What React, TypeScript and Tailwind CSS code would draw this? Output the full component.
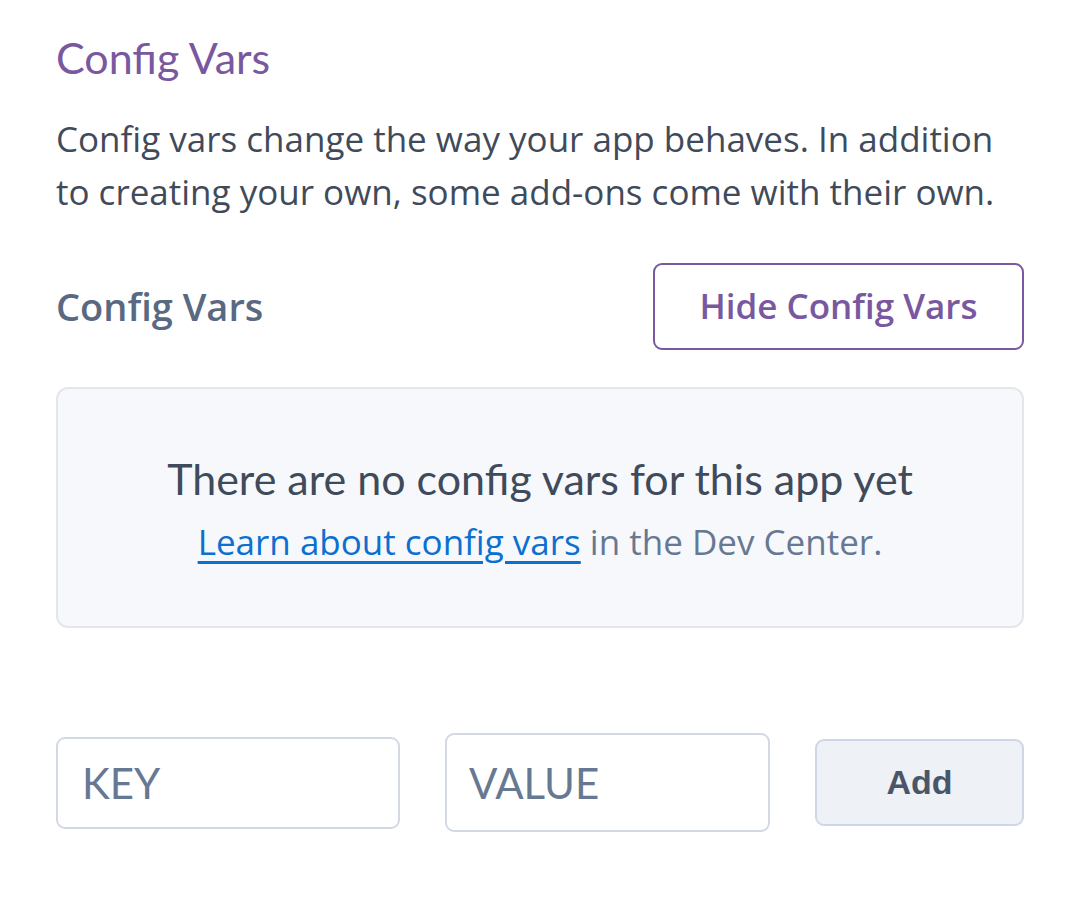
export default function App() {
  return (
    <div className="min-h-screen bg-white px-[56px] pt-[30px] font-['Open_Sans',sans-serif]">
      {/* Section header */}
      <h2 className="font-['Lato',sans-serif] text-[43px] leading-[56px] text-[#79589f]">Config Vars</h2>
      <p className="mt-[26px] text-[35px] leading-[53px] text-[#3f4b5b]">
        Config vars change the way your app behaves. In addition to creating your own, some add-ons come with their own.
      </p>

      {/* Config vars panel */}
      <div className="mt-[45px] flex items-center justify-between">
        <h3 className="text-[38px] font-semibold text-[#596981]">Config Vars</h3>
        <button className="h-[87px] w-[371px] rounded-[9px] border-2 border-[#79589f] bg-white text-[35px] font-semibold text-[#79589f]">
          Hide Config Vars
        </button>
      </div>

      <div className="mt-[37px] flex h-[241px] flex-col items-center justify-center rounded-[12px] border-2 border-[#e3e7ec] bg-[#f7f8fb] pt-[2px]">
        <p className="font-['Lato',sans-serif] text-[43px] leading-[52px] text-[#3f4b5b]">There are no config vars for this app yet</p>
        <p className="mt-[14px] text-[35px] leading-[46px] text-[#677992]">
          <a href="#" className="text-[#0b70d0] underline underline-offset-[6px]">Learn about config vars</a> in the Dev Center.
        </p>
      </div>

      {/* Add row */}
      <div className="mt-[105px] flex items-center font-['Lato',sans-serif]">
        <input
          placeholder="KEY"
          className="h-[92px] w-[344px] rounded-[9px] border-2 border-[#d3d9e4] bg-white px-[24px] text-[42px] text-[#3f4b5b] placeholder:text-[#677992] outline-none"
        />
        <input
          placeholder="VALUE"
          className="ml-[45px] h-[99px] w-[325px] rounded-[9px] border-2 border-[#d3d9e4] bg-white px-[22px] text-[42px] text-[#3f4b5b] placeholder:text-[#677992] outline-none"
        />
        <button className="ml-[45px] h-[87px] w-[211px] rounded-[9px] border-2 border-[#cfd7e6] bg-[#eef1f6] font-['Liberation_Sans',sans-serif] text-[34px] font-bold text-[#4a5668]">
          Add
        </button>
      </div>
    </div>
  )
}
